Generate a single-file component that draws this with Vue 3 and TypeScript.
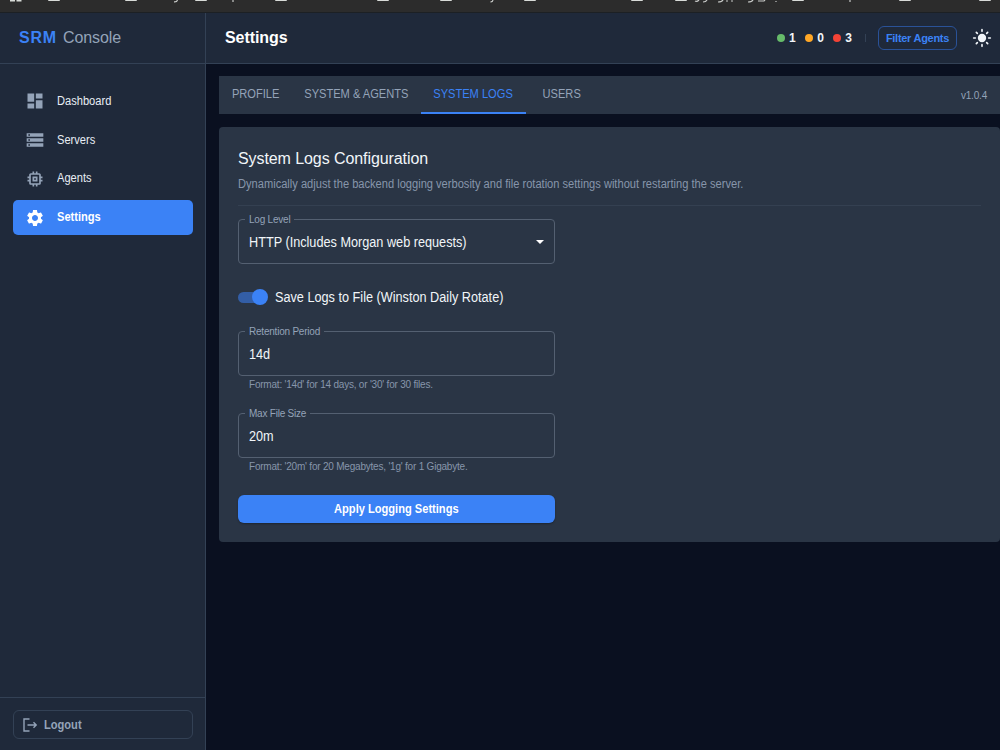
<script setup lang="ts">
import { ref } from 'vue'

interface NavItem { label: string; path: string }

const navItems: NavItem[] = [
  { label: 'Dashboard', path: 'M3 13h8V3H3v10zm0 8h8v-6H3v6zm10 0h8V11h-8v10zm0-18v6h8V3h-8z' },
  { label: 'Servers', path: 'M2 20h20v-4H2v4zm2-3h2v2H4v-2zM2 4v4h20V4H2zm4 3H4V5h2v2zm-4 7h20v-4H2v4zm2-3h2v2H4v-2z' },
  { label: 'Agents', path: 'M15 9H9v6h6V9zm-2 4h-2v-2h2v2zm8-2V9h-2V7c0-1.1-.9-2-2-2h-2V3h-2v2h-2V3H9v2H7c-1.1 0-2 .9-2 2v2H3v2h2v2H3v2h2v2c0 1.1.9 2 2 2h2v2h2v-2h2v2h2v-2h2c1.1 0 2-.9 2-2v-2h2v-2h-2v-2h2zm-4 6H7V7h10v10z' },
  { label: 'Settings', path: 'M19.14 12.94c.04-.3.06-.61.06-.94 0-.32-.02-.64-.07-.94l2.03-1.58c.18-.14.23-.41.12-.61l-1.92-3.32c-.12-.22-.37-.29-.59-.22l-2.39.96c-.5-.38-1.03-.7-1.62-.94l-.36-2.54c-.04-.24-.24-.41-.48-.41h-3.84c-.24 0-.43.17-.47.41l-.36 2.54c-.59.24-1.13.57-1.62.94l-2.39-.96c-.22-.08-.47 0-.59.22L2.74 8.87c-.12.21-.08.47.12.61l2.03 1.58c-.05.3-.09.63-.09.94s.02.64.07.94l-2.03 1.58c-.18.14-.23.41-.12.61l1.92 3.32c.12.22.37.29.59.22l2.39-.96c.5.38 1.03.7 1.62.94l.36 2.54c.05.24.24.41.48.41h3.84c.24 0 .44-.17.47-.41l.36-2.54c.59-.24 1.13-.56 1.62-.94l2.39.96c.22.08.47 0 .59-.22l1.92-3.32c.12-.22.07-.47-.12-.61l-2.01-1.58zM12 15.6c-1.98 0-3.6-1.62-3.6-3.6s1.62-3.6 3.6-3.6 3.6 1.62 3.6 3.6-1.62 3.6-3.6 3.6z' },
]
const activeNav = ref('Settings')

const tabs = ['PROFILE', 'SYSTEM & AGENTS', 'SYSTEM LOGS', 'USERS']
const activeTab = ref('SYSTEM LOGS')

const counts = [
  { tone: 'green', value: 1 },
  { tone: 'orange', value: 0 },
  { tone: 'red', value: 3 },
]

const folders = [48, 125, 195, 275, 377, 440, 524, 631, 675, 792, 899, 979]
const saveToFile = ref(true)
const retention = ref('14d')
const maxSize = ref('20m')
</script>

<template>
  <div class="screen">
    <svg class="bookmarks" width="1000" height="13" viewBox="0 0 1000 13">
      <path class="mark" d="M10 0h5v1.600h-5zM16.500 0h5v1.600h-5z" />
      <rect v-for="x in folders" :key="x" class="mark" :x="x" y="-3" width="12" height="4" rx="1" />
      <path class="stroke" d="M177.500 0q-.5 2-3.500 1.800M233 0v2M493 0q-.5 2-2.500 1.800M850 0v2M695 1q2 1 4-1M703 2q3 0 4-2M718 2q4 0 5-2M726 1h2M731 1h2M748 2q4 0 5-2M758 1h6l1-1M776 1v1" />
      <rect class="edge" y="12" width="1000" height="1" />
    </svg>
    <div class="shell">
      <aside class="sidebar">
        <div class="brand"><b>SRM</b><span>Console</span></div>
        <nav class="nav">
          <a v-for="item in navItems" :key="item.label" class="nav-item" :class="{ active: item.label === activeNav }" @click="activeNav = item.label">
            <svg width="20" height="20" viewBox="0 0 24 24"><path :d="item.path" /></svg>
            <span class="narrow">{{ item.label }}</span>
          </a>
        </nav>
        <div class="side-foot">
          <button class="logout">
            <svg width="16" height="16" viewBox="0 0 16 16"><path d="M7.500 2H2v12h5.500M5.500 8h8.500M11.500 5.300 14.200 8l-2.700 2.700" /></svg>
            <span class="narrow">Logout</span>
          </button>
        </div>
      </aside>

      <div class="main">
        <header class="topbar">
          <h1>Settings</h1>
          <div class="counts">
            <span v-for="c in counts" :key="c.tone" class="count"><i :class="c.tone"></i>{{ c.value }}</span>
          </div>
          <i class="divider"></i>
          <button class="filter"><span>Filter Agents</span></button>
          <svg class="sun" width="20" height="20" viewBox="0 0 24 24">
            <circle cx="12" cy="12" r="5" />
            <path d="M12 2v2M12 20v2M2 12h2M20 12h2M5.200 5.200l1.200 1.200M17.600 17.600l1.200 1.200M5.200 18.800l1.200-1.200M17.600 6.400l1.200-1.200" />
          </svg>
        </header>

        <div class="content">
          <div class="tabs">
            <button v-for="t in tabs" :key="t" class="tab" :class="{ active: t === activeTab }" @click="activeTab = t"><span class="narrow mid">{{ t }}</span></button>
            <span class="version">v1.0.4</span>
          </div>

          <section class="card">
            <h2>System Logs Configuration</h2>
            <p class="lead"><span class="narrow">Dynamically adjust the backend logging verbosity and file rotation settings without restarting the server.</span></p>
            <hr />
            <div class="form">
              <fieldset class="field">
                <legend>Log Level</legend>
                <div class="select"><span class="narrow body">HTTP (Includes Morgan web requests)</span><i class="caret"></i></div>
              </fieldset>
              <label class="switch-row">
                <span class="switch" :class="{ on: saveToFile }" @click="saveToFile = !saveToFile"><i></i></span>
                <span class="narrow body">Save Logs to File (Winston Daily Rotate)</span>
              </label>
              <fieldset class="field">
                <legend>Retention Period</legend>
                <input v-model="retention" class="narrow body" />
              </fieldset>
              <p class="hint">Format: '14d' for 14 days, or '30' for 30 files.</p>
              <fieldset class="field second">
                <legend>Max File Size</legend>
                <input v-model="maxSize" class="narrow body" />
              </fieldset>
              <p class="hint">Format: '20m' for 20 Megabytes, '1g' for 1 Gigabyte.</p>
              <button class="apply"><span class="narrow mid">Apply Logging Settings</span></button>
            </div>
          </section>
        </div>
      </div>
    </div>
  </div>
</template>

<style>
html, body { margin: 0; background: #0a1020; overflow: hidden; }
</style>

<style scoped>
* { box-sizing: border-box; }
.screen { width: 1000px; height: 750px; display: flex; flex-direction: column; overflow: hidden; background: #0a1020; font-family: "Liberation Sans", Arial, sans-serif; color: #f1f5f9; }
button { font-family: inherit; background: none; border: 0; padding: 0; margin: 0; }
.narrow { display: inline-block; white-space: nowrap; transform: scaleX(0.925); transform-origin: 0 50%; }
.narrow.mid { transform-origin: 50% 50%; }
.narrow.body { transform: scaleX(0.906); }
.bookmarks { display: block; flex: none; background: #2c2c2c; }
.mark { fill: #d8dbd8; }
.edge { fill: #1c2024; }
.stroke { fill: none; stroke: #c8cac8; stroke-width: 1.200; }
.shell { flex: 1; display: flex; min-height: 0; }
.sidebar { width: 206px; flex: none; display: flex; flex-direction: column; background: #1f293a; border-right: 1px solid #334155; }
.brand { height: 51px; flex: none; display: flex; align-items: center; gap: 6px; padding-left: 19px; border-bottom: 1px solid #334155; font-size: 16px; color: #94a3b8; }
.brand b { color: #3b82f6; letter-spacing: 0.800px; }
.brand span { letter-spacing: -0.100px; }
.nav { padding: 19.600px 12px 0 13px; display: flex; flex-direction: column; gap: 3.300px; flex: 1; }
.nav-item { height: 35.500px; flex: none; display: flex; align-items: center; padding-left: 12px; gap: 12px; border-radius: 5px; font-size: 12px; color: #e8edf4; }
.nav-item span { margin-top: -1px; }
.nav-item svg { fill: #94a3b8; }
.nav-item.active { background: #3b82f6; color: #fff; font-weight: 700; }
.nav-item.active svg { fill: #fff; }
.side-foot { height: 53px; border-top: 1px solid #334155; padding: 12px 12px 0 13px; }
.logout { width: 180px; height: 29px; border: 1px solid #334155; border-radius: 6px; display: flex; align-items: center; gap: 6px; padding-left: 8px; color: #94a3b8; font-size: 12px; font-weight: 700; }
.logout svg { fill: none; stroke: #94a3b8; stroke-width: 1.400; }
.main { flex: 1; min-width: 0; display: flex; flex-direction: column; }
.topbar { height: 51px; flex: none; display: flex; align-items: center; background: #1f293a; border-bottom: 1px solid #334155; padding: 0 8px 0 19px; }
h1 { margin: 0; font-size: 16px; letter-spacing: -0.080px; font-weight: 700; color: #fff; flex: 1; }
.counts { display: flex; gap: 9.500px; }
.count { display: flex; align-items: center; gap: 4px; font-size: 12px; font-weight: 700; }
.count i { width: 8px; height: 8px; border-radius: 50%; }
.green { background: #66bb6a; }
.orange { background: #ffa726; }
.red { background: #f44336; }
.divider { width: 1px; height: 8px; background: #334155; margin: 0 12px 0 13px; }
.filter { width: 79px; height: 24px; border: 1px solid #2a5298; border-radius: 6px; color: #3b82f6; font-size: 11px; letter-spacing: -0.280px; font-weight: 700; white-space: nowrap; }
.sun { margin-left: 15px; fill: #f1f5f9; stroke: #f1f5f9; stroke-width: 2; stroke-linecap: round; }
.sun circle { stroke: none; }
.content { padding: 12px 0 0 13px; }
.tabs { height: 38px; display: grid; grid-template-columns: 73px 129px 105px 71px 1fr; background: #2a3545; }
.tab { height: 38px; display: flex; justify-content: center; align-items: center; font-size: 12px; color: #94a3b8; border-bottom: 2px solid transparent; }
.tab.active { color: #3b82f6; border-bottom-color: #3b82f6; }
.version { justify-self: end; align-self: center; padding-right: 13px; font-size: 10px; letter-spacing: -0.200px; color: #94a3b8; }
.card { margin-top: 13px; height: 415px; background: #2a3545; border-radius: 4px; padding: 23px 19px 0; }
h2 { margin: 0; font-size: 16px; letter-spacing: -0.080px; line-height: 18px; font-weight: 400; }
.lead { margin: 9px 0 0; height: 14px; font-size: 12px; line-height: 14px; color: #8795ab; }
hr { margin: 14px 0 0; border: 0; border-top: 1px solid #344051; }
.form { width: 317px; display: flex; flex-direction: column; padding-top: 8px; }
.field { margin: 0; padding: 0 10px; min-width: 0; height: 50px; border: 1px solid #546071; border-radius: 4px; }
.field legend { margin-left: -4px; padding: 0 4px; height: 11px; line-height: 11px; font-size: 10px; letter-spacing: -0.220px; color: #94a3b8; }
.field input, .select { display: flex; width: 100%; height: 34px; padding: 0; border: 0; outline: 0; background: transparent; font: 14px/34px "Liberation Sans", Arial, sans-serif; color: #f1f5f9; align-items: center; }
.select { justify-content: space-between; }
.caret { border: 4px solid transparent; border-top-color: #fff; border-bottom: 0; }
.switch-row { height: 62px; padding-top: 4px; display: flex; align-items: center; gap: 7px; font-size: 14px; }
.switch { width: 30px; height: 16px; flex: none; display: flex; align-items: center; }
.switch::before { content: ""; width: 27px; height: 11px; border-radius: 6px; background: #335ea6; }
.switch i { width: 16px; height: 16px; border-radius: 50%; background: #3b82f6; margin-left: -13px; }
.hint { margin: 3px 0 0 11px; font-size: 10px; letter-spacing: -0.210px; line-height: 12px; color: #8795ab; white-space: nowrap; }
.second { margin-top: 17px; }
.apply { margin-top: 22px; height: 28px; border-radius: 6px; background: #3b82f6; color: #fff; font-size: 12px; font-weight: 700; box-shadow: 0 1px 2px rgba(0, 0, 0, 0.3); }
</style>
